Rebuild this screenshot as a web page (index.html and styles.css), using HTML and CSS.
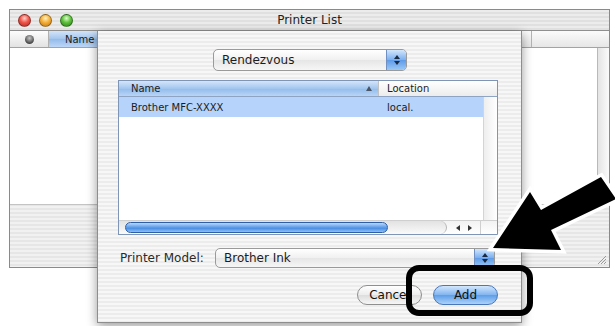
FILE: index.html
```html
<!DOCTYPE html>
<html lang="en">
<head>
    <meta charset="UTF-8">
    <title>Printer List</title>
    <link rel="stylesheet" href="styles.css">
</head>
<body>
    <!-- Ventana principal -->
    <div class="window">
        <div class="titlebar">
            <div class="lights">
                <span class="light red"></span>
                <span class="light amber"></span>
                <span class="light green"></span>
            </div>
            <div class="title">Printer List</div>
        </div>
        <div class="list-head">
            <div class="col-status"><span class="status-icon"></span></div>
            <div class="col-name">Name</div>
            <div class="col-mid"></div>
            <div class="col-last"></div>
        </div>
        <div class="list-body">
            <div class="pane"></div>
            <div class="vtrack"></div>
        </div>
        <div class="window-foot">
            <svg class="grip" width="10" height="10" viewBox="0 0 10 10">
                <path d="M9 1 L1 9 M9 4 L4 9 M9 7 L7 9" stroke="#9a9a9a" stroke-width="1"/>
            </svg>
        </div>
    </div>

    <!-- Hoja de añadir impresora -->
    <div class="sheet">
        <div class="popup popup-browser">
            <span class="popup-label">Rendezvous</span>
            <span class="popup-arrows"><i class="up"></i><i class="down"></i></span>
        </div>

        <div class="table">
            <div class="thead">
                <div class="th th-name">Name <span class="sort"></span></div>
                <div class="th th-loc">Location</div>
            </div>
            <div class="tbody">
                <div class="rows">
                    <div class="row selected">
                        <span class="cell-name">Brother MFC-XXXX</span>
                        <span class="cell-loc">local.</span>
                    </div>
                </div>
                <div class="vscroll"></div>
            </div>
            <div class="hscroll">
                <div class="htrack"><div class="thumb"></div></div>
                <div class="harrows"><i class="left"></i><i class="right"></i></div>
                <div class="corner"></div>
            </div>
        </div>

        <div class="model-row">
            <label class="model-label">Printer Model:</label>
            <div class="popup popup-model">
                <span class="popup-label">Brother Ink</span>
                <span class="popup-arrows"><i class="up"></i><i class="down"></i></span>
            </div>
        </div>

        <div class="buttons">
            <button class="btn">Cancel</button>
            <button class="btn btn-default">Add</button>
        </div>
    </div>

    <!-- Anotaciones -->
    <div class="callout"></div>
    <svg class="arrow" width="615" height="326" viewBox="0 0 615 326">
        <polygon points="493,248 530,192 541,210 601,177 616,199 551,230 561,250" fill="#fff" stroke="#fff" stroke-width="7" stroke-linejoin="miter"/>
        <polygon points="493,248 530,192 541,210 601,177 616,199 551,230 561,250" fill="#000"/>
    </svg>
</body>
</html>
```

FILE: styles.css
```css
/* Estilo general */
* {
    box-sizing: border-box;
}

body {
    margin: 0;
    width: 615px;
    height: 326px;
    overflow: hidden;
    position: relative;
    background: #fff;
    font-family: "DejaVu Sans", Verdana, sans-serif;
    color: #1c1c1c;
}

/* Ventana */
.window {
    margin: 9px 0 0 9px;
    width: 601px;
    height: 259px;
    border: 1px solid #8a8a8a;
    display: flex;
    flex-direction: column;
    background: repeating-linear-gradient(#f1f1f1 0 2px, #e6e6e6 2px 4px);
}

.titlebar {
    height: 21px;
    flex: none;
    display: grid;
    grid-template-columns: 1fr auto 1fr;
    align-items: center;
    padding: 0 8px;
    border-bottom: 1px solid #8f8f8f;
    background: repeating-linear-gradient(#ececec 0 2px, #e0e0e0 2px 4px);
}

.lights {
    display: flex;
    gap: 8px;
}

.light {
    width: 13px;
    height: 13px;
    border-radius: 50%;
    border: 1px solid rgba(0, 0, 0, 0.35);
}

.light.red {
    background: radial-gradient(circle at 50% 30%, #ffd0c8 0, #f0564c 45%, #b0231c 100%);
}

.light.amber {
    background: radial-gradient(circle at 50% 30%, #fff0c0 0, #f5b13a 45%, #c07410 100%);
}

.light.green {
    background: radial-gradient(circle at 50% 30%, #dbffc8 0, #5fc23e 45%, #2c7d18 100%);
}

.title {
    font-size: 12px;
    color: #222;
}

/* Lista de la ventana */
.list-head {
    height: 17px;
    flex: none;
    display: flex;
    border-bottom: 1px solid #a3a3a3;
    font-size: 10px;
}

.col-status {
    width: 39px;
    display: flex;
    align-items: center;
    justify-content: center;
    background: linear-gradient(#fdfdfd, #e2e2e2);
    border-right: 1px solid #b0b0b0;
}

.status-icon {
    width: 9px;
    height: 9px;
    border-radius: 50%;
    background: radial-gradient(circle at 50% 35%, #c8c8c8, #474747 70%);
}

.col-name {
    width: 160px;
    padding-left: 16px;
    display: flex;
    align-items: center;
    background: linear-gradient(#d3e4f9, #a2c5ee 50%, #92bbeb 51%, #bcd6f5);
}

.col-mid {
    flex: 1;
    background: linear-gradient(#fbfbfb, #e6e6e6);
    border-right: 1px solid #b4b4b4;
}

.col-last {
    width: 77px;
    background: linear-gradient(#fbfbfb, #e6e6e6);
}

.list-body {
    height: 157px;
    flex: none;
    display: flex;
    border-bottom: 1px solid #c4c4c4;
}

.pane {
    flex: 1;
    background: #fff;
}

.vtrack {
    width: 12px;
    border-left: 1px solid #b9b9b9;
    background: linear-gradient(to right, #e4e4e4, #fbfbfb);
}

.window-foot {
    flex: 1;
    display: flex;
    justify-content: flex-end;
    align-items: flex-end;
    padding: 0 2px 2px 0;
}

/* Hoja */
.sheet {
    position: absolute;
    left: 97px;
    top: 31px;
    width: 425px;
    height: 292px;
    border: 1px solid #8e8e8e;
    border-top: 0;
    padding: 18px 23px 0 20px;
    display: flex;
    flex-direction: column;
    background: repeating-linear-gradient(#f7f7f7 0 2px, #ececec 2px 4px);
    box-shadow: 0 3px 10px rgba(0, 0, 0, 0.4);
}

.popup {
    display: flex;
    border: 1px solid #9a9a9a;
    border-radius: 5px;
    overflow: hidden;
    background: linear-gradient(#ffffff, #f0f0f0 50%, #e6e6e6 51%, #f6f6f6);
    font-size: 12px;
}

.popup-label {
    flex: 1;
    display: flex;
    align-items: center;
    padding-left: 8px;
}

.popup-arrows {
    width: 20px;
    display: flex;
    flex-direction: column;
    align-items: center;
    justify-content: center;
    gap: 2px;
    border-left: 1px solid #6f90c0;
    background: linear-gradient(#d2e6fc, #79aef0 50%, #5e9be8 51%, #9cc9f7);
}

.popup-arrows i {
    width: 0;
    height: 0;
    border-left: 3px solid transparent;
    border-right: 3px solid transparent;
}

.popup-arrows .up {
    border-bottom: 4px solid #1a2a40;
}

.popup-arrows .down {
    border-top: 4px solid #1a2a40;
}

.popup-browser {
    width: 194px;
    height: 22px;
    align-self: center;
    margin-left: 4px;
}

/* Tabla de impresoras */
.table {
    margin-top: 9px;
    height: 155px;
    border: 1px solid #7f95b6;
    display: flex;
    flex-direction: column;
    background: #fff;
    font-size: 10px;
}

.thead {
    height: 16px;
    flex: none;
    display: flex;
    border-bottom: 1px solid #8fa4c2;
}

.th {
    display: flex;
    align-items: center;
}

.th-name {
    width: 259px;
    padding: 0 6px 0 12px;
    background: linear-gradient(#d4e5fa, #a3c6ef 50%, #93bcec 51%, #b9d4f5);
}

.sort {
    margin-left: auto;
    width: 0;
    height: 0;
    border-left: 3px solid transparent;
    border-right: 3px solid transparent;
    border-bottom: 5px solid #4a5668;
}

.th-loc {
    flex: 1;
    padding-left: 8px;
    border-left: 1px solid #c2c2c2;
    background: linear-gradient(#ffffff, #ececec);
}

.tbody {
    flex: 1;
    display: flex;
}

.rows {
    flex: 1;
}

.row {
    height: 20px;
    display: flex;
    align-items: center;
}

.row.selected {
    background: #b6d4fb;
}

.cell-name {
    width: 259px;
    padding-left: 12px;
}

.cell-loc {
    padding-left: 9px;
}

.vscroll {
    width: 14px;
    border-left: 1px solid #d4d4d4;
    background: linear-gradient(to right, #eeeeee, #ffffff);
}

.hscroll {
    height: 14px;
    flex: none;
    display: flex;
    border-top: 1px solid #cfcfcf;
    background: linear-gradient(#f2f2f2, #ffffff);
}

.htrack {
    width: 328px;
    padding: 1px 0 1px 6px;
    border-right: 1px solid #b4b4b4;
    border-radius: 0 7px 7px 0;
    background: linear-gradient(#e2e2e2, #fafafa);
}

.thumb {
    width: 263px;
    height: 100%;
    border-radius: 6px;
    border: 1px solid #2d5fa8;
    background: linear-gradient(#b8d8fb, #5b9ae6 50%, #3f85df 51%, #8fc0f3);
}

.harrows {
    width: 33px;
    display: flex;
    align-items: center;
    justify-content: center;
    gap: 8px;
}

.harrows i {
    width: 0;
    height: 0;
    border-top: 3px solid transparent;
    border-bottom: 3px solid transparent;
}

.harrows .left {
    border-right: 4px solid #333;
}

.harrows .right {
    border-left: 4px solid #333;
    padding-left: 0;
}

.corner {
    flex: 1;
    border-left: 1px solid #cfcfcf;
}

/* Modelo de impresora */
.model-row {
    margin-top: 13px;
    display: flex;
    align-items: center;
}

.model-label {
    width: 97px;
    padding-left: 2px;
    font-size: 12px;
    color: #2a2a2a;
}

.popup-model {
    width: 280px;
    height: 20px;
}

/* Botones */
.buttons {
    margin-top: 17px;
    display: flex;
    justify-content: flex-end;
    gap: 11px;
}

.btn {
    width: 65px;
    height: 20px;
    padding: 0;
    border-radius: 10px;
    border: 1px solid #8f8f8f;
    font-family: inherit;
    font-size: 12px;
    color: #111;
    background: linear-gradient(#ffffff, #ececec 50%, #dddddd 51%, #f6f6f6);
}

.btn-default {
    border-color: #4a77b8;
    background: linear-gradient(#d3e7fd, #80b4f0 50%, #5e9de8 51%, #acd2fa);
}

/* Anotaciones */
.callout {
    position: absolute;
    left: 406px;
    top: 265px;
    width: 127px;
    height: 51px;
    border: 6px solid #000;
    border-radius: 13px;
}

.arrow {
    position: absolute;
    left: 0;
    top: 0;
    pointer-events: none;
}
```
